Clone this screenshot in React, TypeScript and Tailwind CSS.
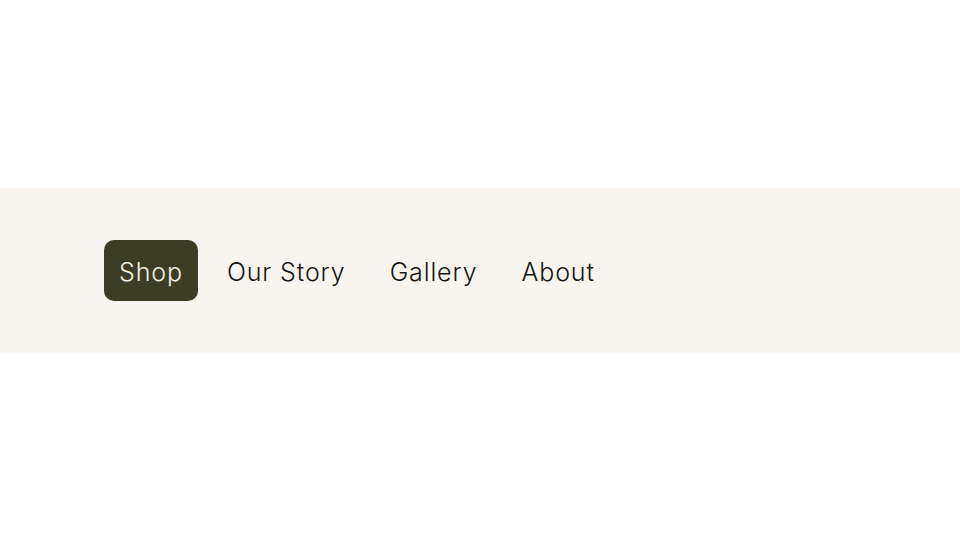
import { useState } from "react"

const navItems = ["Shop", "Our Story", "Gallery", "About"]

export default function App() {
  const [active, setActive] = useState("Shop")

  return (
    <div className="h-screen w-full bg-white flex items-center" style={{ fontFamily: "Inter, 'Open Sans', sans-serif" }}>
      <nav className="w-full h-[165px] bg-[#f8f5f0] flex items-center px-[104px]">
        <ul className="flex items-center gap-[14px]">
          {navItems.map((item) => {
            const isActive = item === active
            return (
              <li key={item}>
                <button
                  onClick={() => setActive(item)}
                  className={`h-[61px] px-[15px] pt-[4px] rounded-[10px] text-[25px] font-light tracking-[0.035em] leading-none ${
                    isActive ? "bg-[#3b3d27] text-[#f3efe4]" : "text-[#161614]"
                  }`}
                >
                  {item}
                </button>
              </li>
            )
          })}
        </ul>
      </nav>
    </div>
  )
}
